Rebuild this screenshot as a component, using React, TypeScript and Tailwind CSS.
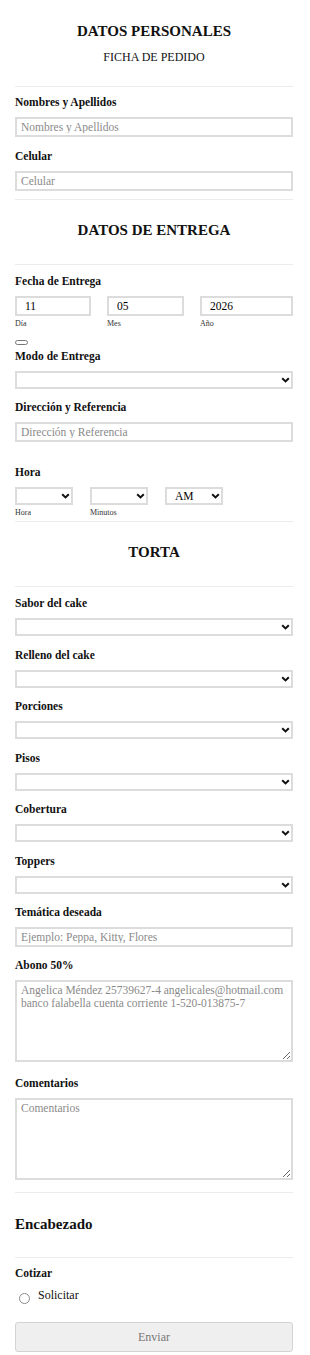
import React from "react";

const serif = "font-['Liberation_Serif','Times_New_Roman',serif]";

function Label({ children, className = "" }: { children: React.ReactNode; className?: string }) {
  return <div className={`text-[11.5px] leading-[14px] font-bold text-[#111] mb-[8px] ${className}`}>{children}</div>;
}

function Campo({ placeholder }: { placeholder: string }) {
  return (
    <input
      type="text"
      placeholder={placeholder}
      className={`block w-full h-[20px] border-2 border-[#dcdcdc] bg-white px-[4px] text-[11.5px] text-[#111] placeholder:text-[#8a8a8a] outline-none ${serif}`}
    />
  );
}

function Chevron() {
  return (
    <svg className="pointer-events-none absolute right-[1px] top-1/2 -translate-y-1/2" width="9" height="6" viewBox="0 0 9 6">
      <path d="M1.2 1.2 4.5 4.4 7.8 1.2" fill="none" stroke="#111" strokeWidth="2" />
    </svg>
  );
}

function Selector({ valor = "", className = "w-full" }: { valor?: string; className?: string }) {
  return (
    <div className={`relative h-[18px] border-2 border-[#dcdcdc] bg-white ${className}`}>
      <select
        defaultValue={valor}
        className={`block h-full w-full appearance-none bg-transparent pl-[8px] text-[11.5px] leading-[14px] text-black outline-none ${serif}`}
      >
        <option value="">{""}</option>
        {valor && <option value={valor}>{valor}</option>}
      </select>
      <Chevron />
    </div>
  );
}

function Linea({ className = "" }: { className?: string }) {
  return <div className={`h-px bg-[#ececec] ${className}`} />;
}

function Titulo({ children, className = "" }: { children: React.ReactNode; className?: string }) {
  return <h2 className={`text-center text-[15px] leading-[18px] font-bold text-[#111] ${className}`}>{children}</h2>;
}

function Grupo({ label, children, className = "mt-[11.5px]" }: { label: string; children: React.ReactNode; className?: string }) {
  return (
    <div className={className}>
      <Label>{label}</Label>
      {children}
    </div>
  );
}

export default function App() {
  const selectsTorta = ["Relleno del cake", "Porciones", "Pisos", "Cobertura", "Toppers"];

  return (
    <div className={`min-h-[1355px] w-[310px] bg-white pl-[15px] pr-[17px] pt-[22px] pb-[5px] text-[#111] ${serif}`}>
      {/* Datos personales */}
      <Titulo>DATOS PERSONALES</Titulo>
      <p className="mt-[10px] text-center text-[12px] leading-[14px]">FICHA DE PEDIDO</p>
      <Linea className="mt-[22px]" />

      <Grupo label="Nombres y Apellidos" className="mt-[8px]">
        <Campo placeholder="Nombres y Apellidos" />
      </Grupo>
      <Grupo label="Celular" className="mt-[12px]">
        <Campo placeholder="Celular" />
      </Grupo>
      <Linea className="mt-[8px]" />

      {/* Datos de entrega */}
      <Titulo className="mt-[21px]">DATOS DE ENTREGA</Titulo>
      <Linea className="mt-[25px]" />

      <Grupo label="Fecha de Entrega" className="mt-[9px]">
        <div className="flex gap-[16px]">
          {[
            { v: "11", t: "Día", w: "w-[76px]" },
            { v: "05", t: "Mes", w: "w-[77px]" },
            { v: "2026", t: "Año", w: "flex-1" },
          ].map((d) => (
            <div key={d.t} className={d.w}>
              <input
                type="text"
                readOnly
                defaultValue={d.v}
                className={`block h-[20px] w-full border-2 border-[#dcdcdc] bg-white pl-[8px] text-[11.5px] text-black outline-none ${serif}`}
              />
              <div className="mt-[3px] text-[8px] leading-[10px] text-[#333]">{d.t}</div>
            </div>
          ))}
        </div>
      </Grupo>
      <div className="mt-[11px] h-[5px] w-[13px] rounded-full border border-[#777]" />

      <Grupo label="Modo de Entrega" className="mt-[4px]">
        <Selector />
      </Grupo>
      <Grupo label="Dirección y Referencia" className="mt-[11px]">
        <Campo placeholder="Dirección y Referencia" />
      </Grupo>

      <Grupo label="Hora" className="mt-[23px]">
        <div className="flex gap-[17px]">
          {[
            { t: "Hora", v: "" },
            { t: "Minutos", v: "" },
            { t: "", v: "AM" },
          ].map((h, i) => (
            <div key={i} className="w-[58px]">
              <Selector valor={h.v} />
              <div className="mt-[3px] h-[10px] text-[8px] leading-[10px] text-[#333]">{h.t}</div>
            </div>
          ))}
        </div>
      </Grupo>
      <Linea className="mt-[3px]" />

      {/* Torta */}
      <Titulo className="mt-[21px]">TORTA</Titulo>
      <Linea className="mt-[25px]" />

      <Grupo label="Sabor del cake" className="mt-[9px]">
        <Selector />
      </Grupo>
      {selectsTorta.map((s) => (
        <Grupo key={s} label={s}>
          <Selector />
        </Grupo>
      ))}

      <Grupo label="Temática deseada">
        <Campo placeholder="Ejemplo: Peppa, Kitty, Flores" />
      </Grupo>

      <Grupo label="Abono 50%" className="mt-[11px]">
        <textarea
          placeholder={"Angelica Méndez 25739627-4 angelicales@hotmail.com\nbanco falabella cuenta corriente 1-520-013875-7"}
          className={`block h-[82px] w-full border-2 border-[#dcdcdc] bg-white px-[4px] pt-[2px] text-[11.5px] leading-[13px] text-[#111] placeholder:text-[#8a8a8a] outline-none ${serif}`}
        />
      </Grupo>

      <Grupo label="Comentarios" className="mt-[14px]">
        <textarea
          placeholder="Comentarios"
          className={`block h-[82px] w-full border-2 border-[#dcdcdc] bg-white px-[4px] pt-[2px] text-[11.5px] leading-[13px] text-[#111] placeholder:text-[#8a8a8a] outline-none ${serif}`}
        />
      </Grupo>
      <Linea className="mt-[12px]" />

      <h2 className="mt-[22px] text-[15px] leading-[18px] font-bold">Encabezado</h2>
      <Linea className="mt-[24px]" />

      <div className="mt-[8px] text-[11.5px] leading-[14px] font-bold">Cotizar</div>
      <label className="mt-[8px] flex items-start">
        <span className="ml-[4px] mt-[5px] block h-[11px] w-[11px] rounded-full border border-[#8a8a8a] bg-white" />
        <span className="ml-[8px] text-[12px] leading-[14px]">Solicitar</span>
      </label>

      <button
        type="button"
        className={`mt-[18px] block h-[30px] w-full rounded-[3px] border border-[#d3d3d3] bg-[#efefef] text-[12px] text-[#777] ${serif}`}
      >
        Enviar
      </button>
    </div>
  );
}
